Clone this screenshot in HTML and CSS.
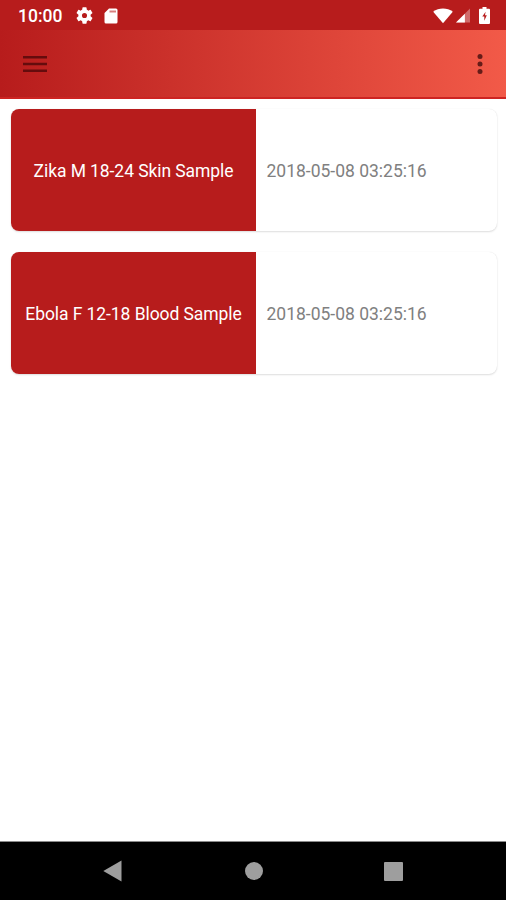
FILE: index.html
```html
<!DOCTYPE html>
<html lang="en">
<head>
<meta charset="utf-8">
<title>Samples</title>
<link rel="stylesheet" href="styles.css">
</head>
<body>
<div class="screen">
  <div class="status">
    <span class="time">10:00</span>
    <svg class="gear" viewBox="2 2 20 20"><path d="M19.14 12.94c.04-.3.06-.61.06-.94s-.02-.64-.07-.94l2.03-1.58a.49.49 0 0 0 .12-.61l-1.92-3.32a.49.49 0 0 0-.59-.22l-2.39.96a7 7 0 0 0-1.62-.94l-.36-2.54A.48.48 0 0 0 13.92 2.4h-3.84a.48.48 0 0 0-.48.41l-.36 2.54a7.4 7.4 0 0 0-1.62.94l-2.39-.96a.48.48 0 0 0-.59.22L2.74 8.87a.47.47 0 0 0 .12.61l2.03 1.58c-.05.3-.09.63-.09.94s.02.64.07.94l-2.03 1.58a.49.49 0 0 0-.12.61l1.92 3.32c.12.22.37.29.59.22l2.39-.96c.5.38 1.03.7 1.62.94l.36 2.54c.05.24.24.41.48.41h3.84c.24 0 .44-.17.47-.41l.36-2.54a7 7 0 0 0 1.62-.94l2.39.96c.22.08.47 0 .59-.22l1.92-3.32a.47.47 0 0 0-.12-.61zM12 15a3 3 0 1 1 0-6 3 3 0 0 1 0 6z"/></svg>
    <svg class="sd" viewBox="0 0 14 16"><path d="M5 .5h7A1.5 1.5 0 0 1 13.500 2v12a1.500 1.500 0 0 1-1.500 1.500H2A1.500 1.500 0 0 1 .5 14V5z"/><path class="contacts" d="M5.500 2.500h6.500v2H5.500z"/></svg>
    <span class="spacer"></span>
    <svg class="wifi" viewBox="0 0 20 16"><path d="M.2 3.700C5.700-.7 14.300-.7 19.800 3.700L10 15.300z"/></svg>
    <svg class="signal" viewBox="0 0 15 15"><path class="dim" d="M15 0v15H0z"/><path d="M9.500 5.500V15H0z"/></svg>
    <svg class="battery" viewBox="0 0 11 17"><path fill-rule="evenodd" d="M3.500 0h4v1.700H10a1 1 0 0 1 1 1V16a1 1 0 0 1-1 1H1a1 1 0 0 1-1-1V2.700a1 1 0 0 1 1-1h2.500zM6.600 4.800 3.300 9.500h2v4.300L7.800 8.300H6z"/></svg>
  </div>
  <div class="appbar">
    <svg class="menu" viewBox="0 0 24 16"><path d="M0 0h24v2.500H0zM0 6.700h24v2.500H0zM0 13.400h24v2.500H0z"/></svg>
    <svg class="more" viewBox="0 0 6 20"><circle cx="3" cy="2.500" r="2.500"/><circle cx="3" cy="10" r="2.500"/><circle cx="3" cy="17.500" r="2.500"/></svg>
  </div>
  <div class="list">
    <div class="card"><div class="label">Zika M 18-24 Skin Sample</div><div class="date">2018-05-08 03:25:16</div></div>
    <div class="card"><div class="label">Ebola F 12-18 Blood Sample</div><div class="date">2018-05-08 03:25:16</div></div>
  </div>
  <div class="nav">
    <svg class="back" viewBox="0 0 19 22"><path d="M18.500.5v21L.3 11z"/></svg>
    <span class="home"></span>
    <span class="recent"></span>
  </div>
</div>
</body>
</html>
```

FILE: styles.css
```css
body {
  margin: 0;
  background: #fff;
  font-family: Roboto, sans-serif;
}
svg {
  display: block;
  flex: none;
}
.screen {
  display: flex;
  flex-direction: column;
  width: 506px;
  height: 900px;
  overflow: hidden;
}
.status {
  display: flex;
  align-items: center;
  box-sizing: border-box;
  height: 30px;
  padding: 1px 16px 0 18px;
  background: #b71c1c;
  color: #fff;
  fill: #fff;
}
.time {
  width: 57.5px;
  font-size: 17.5px;
  font-weight: 500;
  line-height: 20px;
}
.gear {
  width: 17px;
  height: 17px;
}
.sd {
  width: 14px;
  height: 16px;
  margin-left: 11px;
}
.contacts {
  fill: #d98080;
}
.spacer {
  flex: 1;
}
.wifi {
  width: 20px;
  height: 16px;
  margin-right: 3px;
}
.signal {
  width: 14px;
  height: 15px;
  margin-right: 9px;
}
.dim {
  opacity: .35;
}
.battery {
  width: 11px;
  height: 17px;
}
.appbar {
  display: flex;
  align-items: center;
  justify-content: space-between;
  box-sizing: border-box;
  height: 69px;
  padding: 0 23px;
  border-bottom: 2px solid #cd2422;
  background: linear-gradient(90deg, #b71c1c, #f25a48);
}
.menu {
  width: 24px;
  height: 16px;
  margin-top: 1px;
  fill: #650c0d;
}
.more {
  width: 6px;
  height: 20px;
  margin-top: 1px;
  fill: #651c18;
}
.list {
  display: flex;
  flex: 1;
  flex-direction: column;
  gap: 20.5px;
  padding: 10px 9px 0 11px;
}
.card {
  display: flex;
  height: 122px;
  overflow: hidden;
  border-radius: 8px;
  background: #fff;
  box-shadow: 0 1px 2px rgba(0, 0, 0, .13), 0 0 1px rgba(0, 0, 0, .1);
  font-size: 17.5px;
  line-height: 124px;
  white-space: nowrap;
}
.label {
  width: 245px;
  background: #b71c1c;
  color: #fff;
  letter-spacing: -.08px;
  text-align: center;
}
.date {
  padding-left: 10.5px;
  color: #808080;
}
.nav {
  display: flex;
  align-items: center;
  box-sizing: border-box;
  height: 59px;
  padding-left: 103px;
  border-top: 1px solid #8b8b8b;
  background: #000;
}
.back {
  width: 19px;
  height: 22px;
  fill: #9e9e9e;
}
.home {
  width: 18px;
  height: 18px;
  margin-left: 122.5px;
  border-radius: 50%;
  background: #9e9e9e;
}
.recent {
  width: 19px;
  height: 19px;
  margin-left: 121.5px;
  border-radius: 1px;
  background: #9e9e9e;
}
```
